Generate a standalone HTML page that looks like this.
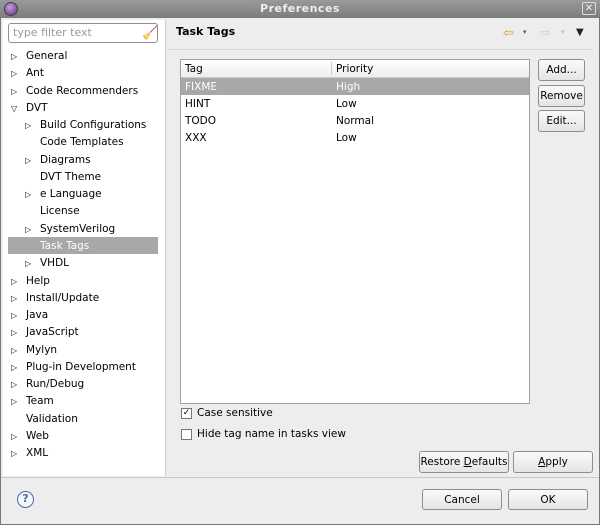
<!DOCTYPE html><html><head><style>
*{margin:0;padding:0;box-sizing:border-box}
body{width:600px;height:525px;overflow:hidden;background:#ededed;font-family:"DejaVu Sans","Liberation Sans",sans-serif;font-size:10.5px;color:#000;position:relative}
.a{position:absolute;white-space:nowrap}
.title{left:0;top:0;width:600px;height:18px;background:linear-gradient(#9a9a9a,#7c7c7c);color:#eee;font-weight:bold;text-align:center;line-height:18px;font-size:11px;letter-spacing:.5px}
.win{left:0;top:18px;width:600px;height:507px;border:1px solid #777;border-top:none}
.left{left:3px;top:20px;width:163px;height:456px;background:#fff;border-right:1px solid #cfcfcf}
.filter{left:8px;top:23px;width:150px;height:20px;border:1px solid #8f8f8f;border-radius:3px;color:#999;padding-left:4px;line-height:18px;background:#fff;font-size:11px}
.ti{position:absolute;height:17px;line-height:19px;white-space:nowrap}
.arr{position:absolute;font-size:8px;line-height:19px}
.sel{background:#a8a8a8;color:#fff}
.btn{position:absolute;border:1px solid #8e8e8e;border-radius:3px;background:linear-gradient(#fafafa,#e4e4e4);text-align:center;line-height:20px;white-space:nowrap}
.tbl{left:180px;top:59px;width:350px;height:345px;border:1px solid #a0a0a0;background:#fff}
.row{position:absolute;left:0;width:348px;height:17px;line-height:19px}
.row span{position:absolute}
</style></head><body>
<div class="a title">Preferences</div>
<div class="a" style="left:4px;top:2px;width:14px;height:14px;border-radius:7px;background:radial-gradient(circle at 40% 35%,#c9a0e0,#5b2a80);border:1px solid #444"></div>
<div class="a" style="left:582px;top:2px;width:14px;height:13px;border:1px solid #ddd;border-radius:2px;color:#eee;font-size:10px;line-height:11px;text-align:center">✕</div>
<div class="a win"></div>
<div class="a left"></div>
<div class="a filter">type filter text</div>
<div class="a" style="left:142px;top:26px;color:#d9a22a;font-size:13px">🧹</div>
<div class="a" style="left:8px;top:237px;width:150px;height:17px;background:#a8a8a8"></div>
<div id="tree"></div>
<div class="a" style="left:176px;top:25px;font-weight:bold;font-size:11px">Task Tags</div>
<div class="a" style="left:503px;top:26px;color:#e0a020;font-size:13px">⇦</div>
<div class="a" style="left:523px;top:28px;color:#555;font-size:7px">▾</div>
<div class="a" style="left:540px;top:26px;color:#ccc;font-size:13px">⇨</div>
<div class="a" style="left:561px;top:28px;color:#bbb;font-size:7px">▾</div>
<div class="a" style="left:576px;top:27px;color:#223;font-size:10px">▼</div>
<div class="a" style="left:168px;top:49px;width:425px;height:1px;background:#d6d6d6"></div>
<div class="a tbl">
<div class="row" style="top:0;height:18px;background:linear-gradient(#fff,#eee);border-bottom:1px solid #ccc"><span style="left:4px">Tag</span><span style="left:150px;top:2px;height:13px;border-left:1px solid #ccc"></span><span style="left:155px">Priority</span></div>
<div class="row sel" style="top:18px"><span style="left:4px">FIXME</span><span style="left:155px">High</span></div>
<div class="row" style="top:35px"><span style="left:4px">HINT</span><span style="left:155px">Low</span></div>
<div class="row" style="top:52px"><span style="left:4px">TODO</span><span style="left:155px">Normal</span></div>
<div class="row" style="top:69px"><span style="left:4px">XXX</span><span style="left:155px">Low</span></div>
</div>
<div class="btn" style="left:538px;top:59px;width:47px;height:22px">Add...</div>
<div class="btn" style="left:538px;top:85px;width:47px;height:22px">Remove</div>
<div class="btn" style="left:538px;top:110px;width:47px;height:22px">Edit...</div>
<div class="a" style="left:181px;top:408px;width:11px;height:11px;border:1px solid #777;background:#fff;font-size:9px;line-height:9px;text-align:center">✓</div>
<div class="a" style="left:197px;top:407px">Case sensitive</div>
<div class="a" style="left:181px;top:429px;width:11px;height:11px;border:1px solid #777;background:#fff"></div>
<div class="a" style="left:197px;top:428px">Hide tag name in tasks view</div>
<div class="btn" style="left:419px;top:451px;width:90px;height:22px">Restore <u>D</u>efaults</div>
<div class="btn" style="left:513px;top:451px;width:80px;height:22px"><u>A</u>pply</div>
<div class="a" style="left:1px;top:477px;width:598px;height:1px;background:#c8c8c8"></div>
<div class="a" style="left:17px;top:491px;width:17px;height:17px;border:1.5px solid #4a6aa0;border-radius:50%;color:#4a6aa0;font-weight:bold;text-align:center;line-height:14px;font-size:11px;background:#f4f6fa">?</div>
<div class="btn" style="left:422px;top:489px;width:80px;height:21px">Cancel</div>
<div class="btn" style="left:508px;top:489px;width:80px;height:21px">OK</div>
<script>
var items=[[0,1,"General"],[0,1,"Ant"],[0,1,"Code Recommenders"],[0,2,"DVT"],[1,1,"Build Configurations"],[1,0,"Code Templates"],[1,1,"Diagrams"],[1,0,"DVT Theme"],[1,1,"e Language"],[1,0,"License"],[1,1,"SystemVerilog"],[1,0,"Task Tags"],[1,1,"VHDL"],[0,1,"Help"],[0,1,"Install/Update"],[0,1,"Java"],[0,1,"JavaScript"],[0,1,"Mylyn"],[0,1,"Plug-in Development"],[0,1,"Run/Debug"],[0,1,"Team"],[0,0,"Validation"],[0,1,"Web"],[0,1,"XML"]];
var h="";items.forEach(function(it,i){var y=47+i*17.27;var x=it[0]?40:26;
if(it[1])h+='<div class="arr" style="left:'+(x-15)+'px;top:'+y+'px">'+(it[1]==2?'▽':'▷')+'</div>';
h+='<div class="ti" style="left:'+x+'px;top:'+y+'px;'+(it[2]=="Task Tags"?'color:#fff':'')+'">'+it[2]+'</div>';});
document.getElementById("tree").innerHTML=h;
</script>
</body></html>
